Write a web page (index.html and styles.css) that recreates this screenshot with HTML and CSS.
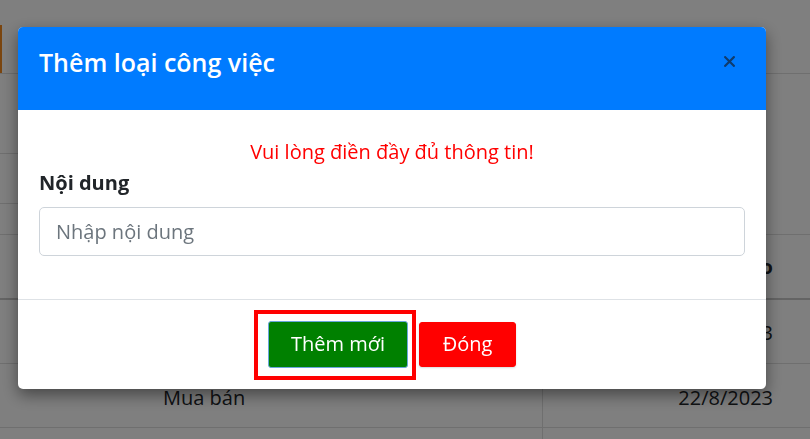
FILE: index.html
```html
<!DOCTYPE html>
<html lang="vi">
<head>
<meta charset="utf-8">
<title>Thêm loại công việc</title>
<link rel="stylesheet" href="styles.css">
</head>
<body>
<div class="page">
  <div class="topbar">
    <span class="btn-orange"></span>
  </div>
  <div class="filter"></div>
  <table class="grid">
    <thead>
      <tr><th class="c1">Tên loại công việc</th><th class="c2">Ngày tạo</th></tr>
    </thead>
    <tbody>
      <tr><td class="c1">Xây dựng</td><td class="c2">22/8/2023</td></tr>
      <tr><td class="c1">Mua bán</td><td class="c2">22/8/2023</td></tr>
      <tr class="last"><td class="c1"></td><td class="c2"></td></tr>
    </tbody>
  </table>
</div>
<div class="backdrop"></div>
<div class="modal">
  <div class="modal-header">
    <h5 class="modal-title">Thêm loại công việc</h5>
    <button class="close" aria-label="Close">
      <svg width="11" height="11" viewBox="0 0 11 11"><path d="M1.2 1.2 L9.8 9.8 M9.8 1.2 L1.2 9.8" stroke="#0f3c6e" stroke-width="2.2" stroke-linecap="square"/></svg>
    </button>
  </div>
  <div class="modal-body">
    <p class="error">Vui lòng điền đầy đủ thông tin!</p>
    <label class="label">Nội dung</label>
    <input class="input" type="text" placeholder="Nhập nội dung">
  </div>
  <div class="modal-footer">
    <button class="btn btn-add">Thêm mới</button>
    <button class="btn btn-close">Đóng</button>
  </div>
</div>
</body>
</html>
```
FILE: styles.css
```css
* { box-sizing: border-box; }
html, body { margin: 0; padding: 0; }
html { overflow: hidden; }
body {
  font-family: "Open Sans", "Noto Sans", sans-serif;
  color: #212529;
  background: #fff;
  width: 810px;
  height: 439px;
  overflow: hidden;
}
.page { width: 810px; height: 439px; overflow: hidden; }
.topbar {
  height: 74px;
  border-bottom: 1px solid #dedede;
  display: flex;
  align-items: flex-end;
}
.btn-orange {
  display: block;
  width: 62px;
  height: 48px;
  margin-left: -60px;
  background: #f58a1f;
}
.filter {
  margin-top: 79px;
  width: 300px;
  height: 51px;
  border-top: 1px solid #dedede;
  border-bottom: 1px solid #dedede;
}
.grid {
  margin-top: 30px;
  width: 810px;
  border-collapse: collapse;
  font-size: 20px;
}
.grid th, .grid td {
  padding: 0;
  border-top: 1px solid #dedede;
}
.grid thead th {
  height: 64px;
  border-bottom: 2px solid #c8c8c8;
  font-weight: 700;
}
.grid tbody td { padding-top: 3px; }
.grid tbody tr:nth-child(1) td { height: 65px; }
.grid tbody tr:nth-child(2) td { height: 64px; }
.grid tbody tr.last td { height: 20px; }
.grid .c1 { width: 542px; text-align: left; padding-left: 163px; }
.grid .c2 { text-align: right; padding-right: 37px; border-left: 1px solid #dedede; }
.grid thead .c2 { border-left: 0; }

.backdrop {
  position: fixed;
  inset: 0;
  background: rgba(0, 0, 0, 0.5);
}
.modal {
  position: fixed;
  left: 18px;
  top: 27px;
  width: 748px;
  height: 362px;
  background: #fff;
  border-radius: 5px;
  box-shadow: 0 6px 16px rgba(0, 0, 0, 0.45);
  display: flex;
  flex-direction: column;
}
.modal-header {
  height: 83px;
  flex: none;
  background: #007bff;
  border-radius: 5px 5px 0 0;
  padding: 0 31px 0 21px;
  display: flex;
  align-items: flex-start;
  justify-content: space-between;
}
.modal-title {
  margin: 17px 0 0;
  color: #fff;
  font-size: 25px;
  font-weight: 600;
  line-height: 36px;
}
.close {
  background: none;
  border: 0;
  padding: 0;
  margin-top: 29px;
  width: 11px;
  height: 11px;
  display: flex;
}
.modal-body {
  padding: 27px 21px 43px;
  display: flex;
  flex-direction: column;
  flex: none;
}
.error {
  margin: 0;
  text-align: center;
  color: #ff0000;
  font-size: 20px;
  line-height: 30px;
}
.label {
  margin-top: 1px;
  font-size: 20px;
  font-weight: 700;
  line-height: 30px;
  color: #212529;
}
.input {
  margin-top: 9px;
  height: 49px;
  width: 100%;
  border: 1px solid #ced4da;
  border-radius: 5px;
  padding: 0 16px;
  font-family: inherit;
  font-size: 20px;
  color: #495057;
}
.input::placeholder { color: #6c757d; }
.modal-footer {
  flex: 1;
  border-top: 1px solid #dee2e6;
  display: flex;
  align-items: center;
  justify-content: center;
  gap: 11px;
  padding-bottom: 1px;
}
.btn {
  font-family: inherit;
  font-size: 20px;
  line-height: 30px;
  color: #fff;
  border-radius: 3px;
  cursor: pointer;
}
.btn-add {
  position: relative;
  width: 140px;
  background: #008000;
  border: 1px solid #6aa7dc;
  padding: 7px 0 8px;
}
.btn-add::after {
  content: "";
  position: absolute;
  left: -15px;
  top: -12px;
  right: -9px;
  bottom: -13px;
  border: 4px solid #ff0000;
}
.btn-close {
  width: 97px;
  background: #ff0000;
  border: 1px solid #ff0000;
  padding: 6px 0 7px;
  box-shadow: 0 1px 2px rgba(0, 0, 0, 0.15);
}
```
